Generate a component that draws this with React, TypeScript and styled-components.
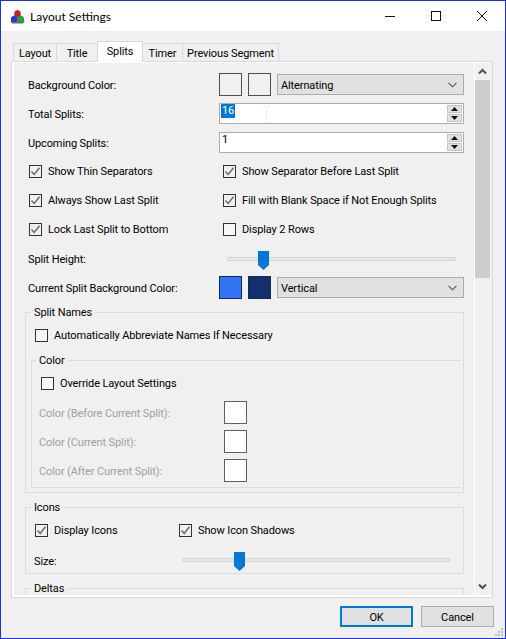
import styled, { createGlobalStyle } from 'styled-components';

const GlobalStyle = createGlobalStyle`
  html, body { margin: 0; padding: 0; background: #f0f0f0; }
  * { box-sizing: border-box; }
`;

const Window = styled.div`
  width: 506px;
  height: 639px;
  border: 1px solid #1c2fe8;
  background: #f0f0f0;
  display: flex;
  flex-direction: column;
  font-family: 'Roboto', 'Open Sans', sans-serif;
  font-size: 11px;
  letter-spacing: -0.12px;
  color: #000;
  position: relative;
  overflow: hidden;
`;

const TitleBar = styled.div`
  height: 30px;
  flex: none;
  background: #fff;
  display: flex;
  align-items: center;
  padding-left: 9px;
`;

const TitleText = styled.span`
  margin-left: 5px;
  font-family: 'Lato', 'Open Sans', sans-serif;
  font-size: 12px;
  letter-spacing: 0;
`;

const WindowButtons = styled.div`
  margin-left: auto;
  display: flex;
`;

const WindowButton = styled.div`
  width: 46px;
  height: 30px;
  display: flex;
  align-items: center;
  justify-content: center;
`;

const Tabs = styled.div`
  display: flex;
  align-items: flex-end;
  height: 30px;
  flex: none;
  padding-left: 13px;
  position: relative;
  z-index: 1;
`;

const Tab = styled.div<{ $active?: boolean; $width: number }>`
  width: ${p => p.$width}px;
  height: ${p => (p.$active ? '21px' : '18px')};
  margin-bottom: ${p => (p.$active ? '-1px' : '0')};
  margin-left: -1px;
  padding-top: 2px;
  background: ${p => (p.$active ? '#fff' : '#f0f0f0')};
  border: 1px solid #d9d9d9;
  border-bottom: none;
  position: ${p => (p.$active ? 'relative' : 'static')};
  line-height: 16px;
  text-align: center;
  white-space: nowrap;
`;

const Panel = styled.div`
  width: 482px;
  height: 537px;
  flex: none;
  margin-left: 10px;
  border: 1px solid #d9d9d9;
  background: #fff;
  padding: 1px 0 2px 2px;
  display: flex;
`;

const Scroller = styled.div`
  width: 460px;
  height: 100%;
  margin-right: 1px;
  background: #f0f0f0;
  padding-top: 10px;
  overflow: hidden;
`;

const ScrollBar = styled.div`
  width: 17px;
  height: 100%;
  background: #f0f0f0;
  display: flex;
  flex-direction: column;
`;

const ScrollArrow = styled.div`
  height: 17px;
  width: 15px;
  flex: none;
  display: flex;
  align-items: center;
  justify-content: center;
`;

const ScrollThumb = styled.div`
  height: 198px;
  width: 15px;
  flex: none;
  background: #cdcdcd;
`;

const ScrollSpacer = styled.div`
  flex: 1;
`;

const Row = styled.div<{ $height: number; $top?: number; $left?: number }>`
  display: flex;
  align-items: center;
  height: ${p => p.$height}px;
  margin-top: ${p => p.$top ?? 0}px;
  padding-left: ${p => p.$left ?? 14}px;
  white-space: nowrap;
`;

const Label = styled.span<{ $width: number; $disabled?: boolean }>`
  width: ${p => p.$width}px;
  flex: none;
  padding-top: 2px;
  color: ${p => (p.$disabled ? '#a0a0a0' : 'inherit')};
`;

const Swatch = styled.div<{ $fill?: string; $border?: string }>`
  width: 23px;
  height: 23px;
  flex: none;
  margin-right: 6px;
  background: ${p => p.$fill ?? '#f0f0f0'};
  border: 1px solid ${p => p.$border ?? '#4f4f4f'};
`;

const Combo = styled.div`
  width: 187px;
  height: 21px;
  flex: none;
  background: #e1e1e1;
  border: 1px solid #adadad;
  display: flex;
  align-items: center;
  justify-content: space-between;
  padding: 1px 6px 0 3px;
`;

const NumberBox = styled.div`
  width: 245px;
  height: 21px;
  flex: none;
  position: relative;
  background: #fff;
  border: 1px solid #adadad;
  display: flex;
  align-items: flex-start;
  padding-left: 1px;
`;

const NumberValue = styled.span`
  line-height: 14px;
  padding: 0 1px;
`;

const Selected = styled(NumberValue)`
  background: #0078d7;
  color: #fff;
`;

const TextCursor = styled.svg`
  position: absolute;
  left: 43px;
  top: 2px;
`;

const Spinner = styled.div`
  width: 15px;
  height: 17px;
  margin: 1px 1px 0 auto;
  display: flex;
  flex-direction: column;
  gap: 1px;
`;

const SpinButton = styled.div`
  flex: 1;
  background: #e1e1e1;
  border: 1px solid #c4c4c4;
  display: flex;
  align-items: center;
  justify-content: center;
`;

const CheckRow = styled.div<{ $height?: number; $top?: number; $left: number }>`
  display: flex;
  align-items: center;
  height: ${p => p.$height ?? 29}px;
  margin-top: ${p => p.$top ?? 0}px;
  padding-left: ${p => p.$left}px;
  white-space: nowrap;
`;

const CheckItem = styled.div<{ $width: number }>`
  width: ${p => p.$width}px;
  flex: none;
  display: flex;
  align-items: center;
  gap: 6px;
`;

const CheckText = styled.span``;

const Box = styled.div<{ $checked?: boolean }>`
  width: 13px;
  height: 13px;
  flex: none;
  border: 1px solid #333;
  background: ${p => (p.$checked ? '#f0f0f0' : '#f7f7f7')};
  display: flex;
  align-items: center;
  justify-content: center;
`;

const SliderTrack = styled.div<{ $width: number }>`
  width: ${p => p.$width}px;
  height: 4px;
  flex: none;
  position: relative;
  background: #e7e7e7;
  border: 1px solid #d6d6d6;
`;

const SliderThumb = styled.svg<{ $left: number }>`
  position: absolute;
  left: ${p => p.$left}px;
  top: -7px;
`;

const Group = styled.fieldset<{ $top: number; $height?: number }>`
  width: 439px;
  height: ${p => (p.$height ? `${p.$height}px` : 'auto')};
  margin: ${p => p.$top}px 0 0 11px;
  padding: 0 0 0 5px;
  min-width: 0;
  border: 1px solid #dcdcdc;

  ${CheckText} {
    padding-top: 1px;
  }
`;

const SubGroup = styled.fieldset`
  width: 430px;
  height: 136px;
  margin: 9px 0 0 0;
  padding: 0;
  min-width: 0;
  border: 1px solid #dcdcdc;
  border-right: none;
`;

const Legend = styled.legend`
  padding: 1px 3px 0;
  height: 16px;
  line-height: 16px;
`;

const SubLegend = styled(Legend)`
  margin-left: 4px;
`;

const Footer = styled.div`
  flex: 1;
  display: flex;
  justify-content: flex-end;
  gap: 8px;
  padding: 8px 11px 0 0;
`;

const Button = styled.div<{ $primary?: boolean }>`
  width: 73px;
  height: 21px;
  padding-top: 1px;
  background: #e1e1e1;
  border: ${p => (p.$primary ? '2px solid #0078d7' : '1px solid #adadad')};
  display: flex;
  align-items: center;
  justify-content: center;
`;

const Grip = styled.svg`
  position: absolute;
  right: 2px;
  bottom: 2px;
`;

const Chevron = () => (
  <svg width="9" height="6" viewBox="0 0 9 6">
    <path d="M.5.8 4.5 4.8 8.5.8" fill="none" stroke="#555" strokeWidth="1.1" />
  </svg>
);

const Tick = () => (
  <svg width="11" height="11" viewBox="0 0 11 11">
    <path d="M1.5 5.5 4.2 8.5 9.5 1.8" fill="none" stroke="#666" strokeWidth="1.4" />
  </svg>
);

const SpinArrow = ({ down }: { down?: boolean }) => (
  <svg width="7" height="4" viewBox="0 0 7 4">
    <path d={down ? 'M0 0H7L3.5 4Z' : 'M0 4H7L3.5 0Z'} fill="#111" />
  </svg>
);

const ScrollChevron = ({ down }: { down?: boolean }) => (
  <svg width="9" height="7" viewBox="0 0 9 7">
    <path d={down ? 'M1 1.5 4.5 5 8 1.5' : 'M1 5.5 4.5 2 8 5.5'} fill="none" stroke="#505050" strokeWidth="2" />
  </svg>
);

const Thumb = ({ left }: { left: number }) => (
  <SliderThumb $left={left} width="11" height="19" viewBox="0 0 11 19">
    <path d="M0 0H11V14L5.5 19 0 14Z" fill="#0078d7" />
  </SliderThumb>
);

const Logo = () => (
  <svg width="15" height="15" viewBox="0 0 15 15">
    <path d="M7.5 .5 14.5 12.5 13 14.5H2L.5 12.5Z" fill="#6a6a6a" />
    <circle cx="7.5" cy="4.5" r="3.2" fill="#c81e2c" />
    <circle cx="4" cy="10" r="3.1" fill="#1c3fd0" />
    <circle cx="11" cy="10" r="3.1" fill="#22a83a" />
  </svg>
);

const Check = ({ checked, width, label }: { checked?: boolean; width: number; label: string }) => (
  <CheckItem $width={width}>
    <Box $checked={checked}>{checked && <Tick />}</Box>
    <CheckText>{label}</CheckText>
  </CheckItem>
);

const NumberField = ({ children }: { children: React.ReactNode }) => (
  <NumberBox>
    {children}
    <Spinner>
      <SpinButton>
        <SpinArrow />
      </SpinButton>
      <SpinButton>
        <SpinArrow down />
      </SpinButton>
    </Spinner>
  </NumberBox>
);

const colorRows = ['Color (Before Current Split):', 'Color (Current Split):', 'Color (After Current Split):'];

export default function App() {
  return (
    <>
      <GlobalStyle />
      <Window>
        <TitleBar>
          <Logo />
          <TitleText>Layout Settings</TitleText>
          <WindowButtons>
            <WindowButton>
              <svg width="10" height="10" viewBox="0 0 10 10">
                <path d="M0 5.5H10" stroke="#111" />
              </svg>
            </WindowButton>
            <WindowButton>
              <svg width="10" height="10" viewBox="0 0 10 10">
                <rect x=".5" y=".5" width="9" height="9" fill="none" stroke="#111" />
              </svg>
            </WindowButton>
            <WindowButton>
              <svg width="10" height="10" viewBox="0 0 10 10">
                <path d="M0 0 10 10M10 0 0 10" stroke="#111" />
              </svg>
            </WindowButton>
          </WindowButtons>
        </TitleBar>

        <Tabs>
          <Tab $width={44}>Layout</Tab>
          <Tab $width={42}>Title</Tab>
          <Tab $active $width={46}>Splits</Tab>
          <Tab $width={41}>Timer</Tab>
          <Tab $width={97}>Previous Segment</Tab>
        </Tabs>

        <Panel>
          <Scroller>
            <Row $height={23}>
              <Label $width={191}>Background Color:</Label>
              <Swatch />
              <Swatch />
              <Combo>
                Alternating
                <Chevron />
              </Combo>
            </Row>
            <Row $height={21} $top={7}>
              <Label $width={191}>Total Splits:</Label>
              <NumberField>
                <Selected>16</Selected>
                <TextCursor width="7" height="17" viewBox="0 0 7 17">
                  <path d="M0 .5H2.5L3.5 1.5 4.5.5H7M3.5 1.5V15.5M0 16.5H2.5L3.5 15.5 4.5 16.5H7" fill="none" stroke="#ececec" />
                </TextCursor>
              </NumberField>
            </Row>
            <Row $height={21} $top={8}>
              <Label $width={191}>Upcoming Splits:</Label>
              <NumberField>
                <NumberValue>1</NumberValue>
              </NumberField>
            </Row>

            <CheckRow $left={15} $top={4}>
              <Check checked width={194} label="Show Thin Separators" />
              <Check checked width={230} label="Show Separator Before Last Split" />
            </CheckRow>
            <CheckRow $left={15}>
              <Check checked width={194} label="Always Show Last Split" />
              <Check checked width={230} label="Fill with Blank Space if Not Enough Splits" />
            </CheckRow>
            <CheckRow $left={15}>
              <Check checked width={194} label="Lock Last Split to Bottom" />
              <Check width={230} label="Display 2 Rows" />
            </CheckRow>

            <Row $height={29}>
              <Label $width={199}>Split Height:</Label>
              <SliderTrack $width={229}>
                <Thumb left={30} />
              </SliderTrack>
            </Row>
            <Row $height={23} $top={3}>
              <Label $width={191}>Current Split Background Color:</Label>
              <Swatch $fill="#3373f4" $border="#0f2a5c" />
              <Swatch $fill="#14306f" $border="#0f2a5c" />
              <Combo>
                Vertical
                <Chevron />
              </Combo>
            </Row>

            <Group $top={5} $height={189}>
              <Legend>Split Names</Legend>
              <CheckRow $left={4} $height={16} $top={7}>
                <Check width={420} label="Automatically Abbreviate Names If Necessary" />
              </CheckRow>
              <SubGroup>
                <SubLegend>Color</SubLegend>
                <CheckRow $left={9} $height={16} $top={7}>
                  <Check width={300} label="Override Layout Settings" />
                </CheckRow>
                {colorRows.map((label, i) => (
                  <Row key={label} $height={23} $top={i === 0 ? 10 : 6} $left={7}>
                    <Label $disabled $width={185}>{label}</Label>
                    <Swatch $fill="#fff" $border="#606060" />
                  </Row>
                ))}
              </SubGroup>
            </Group>

            <Group $top={6} $height={75}>
              <Legend>Icons</Legend>
              <CheckRow $left={4} $height={16} $top={7}>
                <Check checked width={144} label="Display Icons" />
                <Check checked width={200} label="Show Icon Shadows" />
              </CheckRow>
              <Row $height={20} $top={12} $left={3}>
                <Label $width={149}>Size:</Label>
                <SliderTrack $width={267}>
                  <Thumb left={50} />
                </SliderTrack>
              </Row>
            </Group>

            <Group $top={6} $height={60}>
              <Legend>Deltas</Legend>
            </Group>
          </Scroller>
          <ScrollBar>
            <ScrollArrow>
              <ScrollChevron />
            </ScrollArrow>
            <ScrollThumb />
            <ScrollSpacer />
            <ScrollArrow>
              <ScrollChevron down />
            </ScrollArrow>
          </ScrollBar>
        </Panel>

        <Footer>
          <Button $primary>OK</Button>
          <Button>Cancel</Button>
        </Footer>
        <Grip width="8" height="8" viewBox="0 0 8 8">
          <path d="M6 0H8V2H6ZM3 3H5V5H3ZM6 3H8V5H6ZM0 6H2V8H0ZM3 6H5V8H3ZM6 6H8V8H6Z" fill="#bdbdbd" />
        </Grip>
      </Window>
    </>
  );
}
